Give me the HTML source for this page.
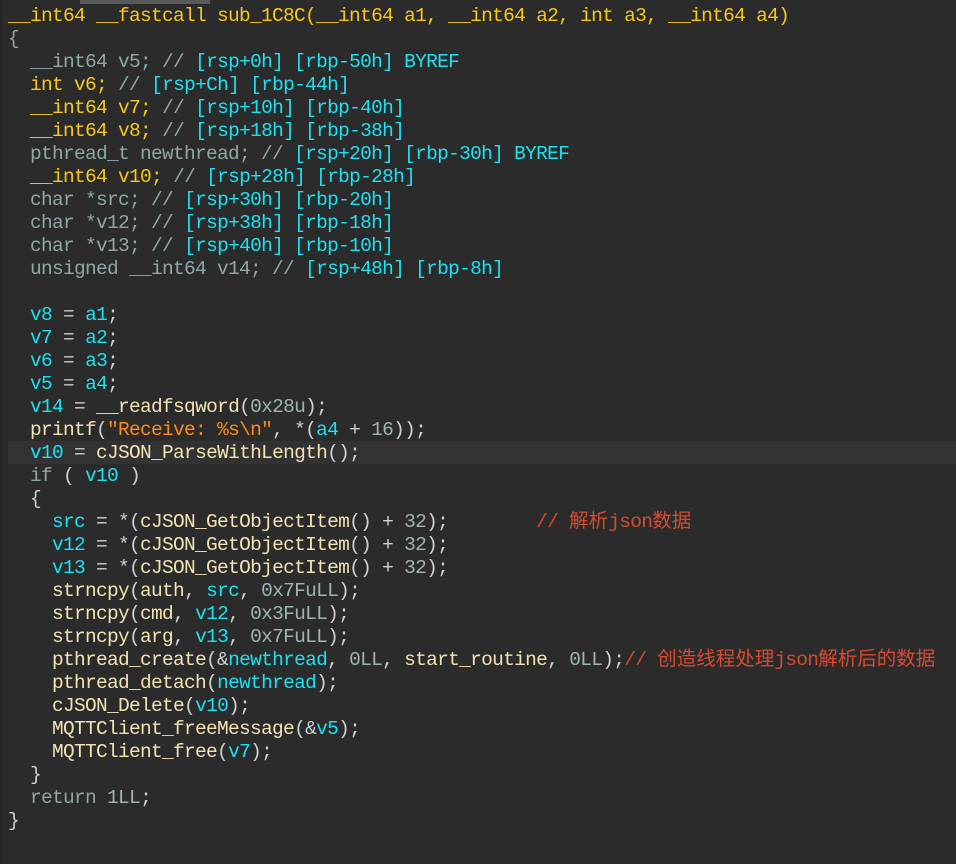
<!DOCTYPE html>
<html><head><meta charset="utf-8"><style>
html,body{margin:0;padding:0;background:#2b2b2b;width:956px;height:864px;overflow:hidden}
.sb{position:absolute;left:80px;top:0;width:130px;height:4px;background:#5a5a5a}
.gut{position:absolute;left:0;top:0;width:3px;height:864px;background:#262626}
.hl{position:absolute;left:8px;top:441px;width:948px;height:23px;background:#323232}
pre{position:absolute;left:8px;top:5px;margin:0;font-family:"Liberation Mono","Noto Sans CJK SC",monospace;font-size:19.5px;letter-spacing:-0.7px;line-height:23px;color:#d0d0d0}
.y{color:#f7c81a}.g{color:#8fa7a7}.c{color:#1de0f0}.f{color:#f2e3b3}.s{color:#ff8a1a}.r{color:#d84a30}.p{color:#c8c8c8}.n{color:#a0b4b4}
.cj{letter-spacing:0}
</style></head><body>
<div class="sb"></div><div class="gut"></div><div class="hl"></div>
<pre><span class="y">__int64 __fastcall sub_1C8C(__int64 a1, __int64 a2, int a3, __int64 a4)</span>
<span class="g">{</span>
  <span class="g">__int64 v5; //</span> <span class="c">[rsp+0h] [rbp-50h] BYREF</span>
  <span class="y">int v6;</span> <span class="g">//</span> <span class="c">[rsp+Ch] [rbp-44h]</span>
  <span class="y">__int64 v7;</span> <span class="g">//</span> <span class="c">[rsp+10h] [rbp-40h]</span>
  <span class="y">__int64 v8;</span> <span class="g">//</span> <span class="c">[rsp+18h] [rbp-38h]</span>
  <span class="g">pthread_t newthread; //</span> <span class="c">[rsp+20h] [rbp-30h] BYREF</span>
  <span class="y">__int64 v10;</span> <span class="g">//</span> <span class="c">[rsp+28h] [rbp-28h]</span>
  <span class="g">char *src; //</span> <span class="c">[rsp+30h] [rbp-20h]</span>
  <span class="g">char *v12; //</span> <span class="c">[rsp+38h] [rbp-18h]</span>
  <span class="g">char *v13; //</span> <span class="c">[rsp+40h] [rbp-10h]</span>
  <span class="g">unsigned __int64 v14; //</span> <span class="c">[rsp+48h] [rbp-8h]</span>

  <span class="c">v8</span> <span class="p">=</span> <span class="c">a1</span>;
  <span class="c">v7</span> <span class="p">=</span> <span class="c">a2</span>;
  <span class="c">v6</span> <span class="p">=</span> <span class="c">a3</span>;
  <span class="c">v5</span> <span class="p">=</span> <span class="c">a4</span>;
  <span class="c">v14</span> = <span class="f">__readfsqword</span>(<span class="n">0x28u</span>);
  <span class="f">printf</span>(<span class="s">"Receive: %s\n"</span>, *(<span class="c">a4</span> + <span class="n">16</span>));
  <span class="c">v10</span> = <span class="f">cJSON_ParseWithLength</span>();
  <span class="g">if</span> ( <span class="c">v10</span> )
  {
    <span class="c">src</span> = *(<span class="f">cJSON_GetObjectItem</span>() + <span class="n">32</span>);        <span class="r">// <span class="cj">解析</span>json<span class="cj">数据</span></span>
    <span class="c">v12</span> = *(<span class="f">cJSON_GetObjectItem</span>() + <span class="n">32</span>);
    <span class="c">v13</span> = *(<span class="f">cJSON_GetObjectItem</span>() + <span class="n">32</span>);
    <span class="f">strncpy</span>(<span class="f">auth</span>, <span class="c">src</span>, <span class="n">0x7FuLL</span>);
    <span class="f">strncpy</span>(<span class="f">cmd</span>, <span class="c">v12</span>, <span class="n">0x3FuLL</span>);
    <span class="f">strncpy</span>(<span class="f">arg</span>, <span class="c">v13</span>, <span class="n">0x7FuLL</span>);
    <span class="f">pthread_create</span>(&amp;<span class="c">newthread</span>, <span class="n">0LL</span>, <span class="f">start_routine</span>, <span class="n">0LL</span>);<span class="r">// <span class="cj">创造线程处理</span>json<span class="cj">解析后的数据</span></span>
    <span class="f">pthread_detach</span>(<span class="c">newthread</span>);
    <span class="f">cJSON_Delete</span>(<span class="c">v10</span>);
    <span class="f">MQTTClient_freeMessage</span>(&amp;<span class="c">v5</span>);
    <span class="f">MQTTClient_free</span>(<span class="c">v7</span>);
  }
  <span class="g">return</span> <span class="n">1LL</span>;
}</pre>
</body></html>
